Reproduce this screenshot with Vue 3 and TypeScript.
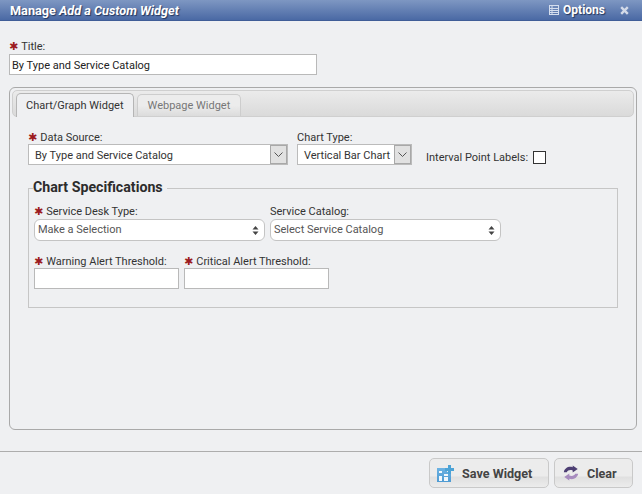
<script setup lang="ts">
const title = 'By Type and Service Catalog'
</script>

<template>
  <div class="dialog">
    <header class="head">
      <div class="head-title">Manage <em>Add a Custom Widget</em></div>
      <div class="head-options">
        <svg class="opt-icon" width="10" height="10" viewBox="0 0 10 10">
          <rect x="0.5" y="0.5" width="9" height="9" fill="none" stroke="#d5deee" />
          <path d="M0 3.500h10M0 5.500h10M0 7.500h10M3 0v10" stroke="#d5deee" fill="none" />
        </svg>
        <span>Options</span>
      </div>
      <svg class="close" width="9" height="9" viewBox="0 0 9 9">
        <path d="M1.200 1.200l6.600 6.600M7.800 1.200l-6.600 6.600" stroke="#d3dae8" stroke-width="2.400" />
      </svg>
    </header>

    <main class="body">
      <label class="lbl title-lbl"><span class="req">✱</span>Title:</label>
      <input class="text title-input" :value="title" />

      <section class="panel">
        <div class="tabbar">
          <div class="tab active">Chart/Graph Widget</div>
          <div class="tab second">Webpage Widget</div>
        </div>

        <div class="panel-content">
          <div class="row-top">
            <div class="col source">
              <label class="lbl low"><span class="req">✱</span>Data Source:</label>
              <div class="combo">
                <span class="combo-text">By Type and Service Catalog</span>
                <span class="combo-btn">
                  <svg width="9" height="5" viewBox="0 0 9 5"><path d="M0.500 0.500L4.500 4.500L8.500 0.500" fill="none" stroke="#555" /></svg>
                </span>
              </div>
            </div>
            <div class="col type">
              <label class="lbl low">Chart Type:</label>
              <div class="combo">
                <span class="combo-text">Vertical Bar Chart</span>
                <span class="combo-btn">
                  <svg width="9" height="5" viewBox="0 0 9 5"><path d="M0.500 0.500L4.500 4.500L8.500 0.500" fill="none" stroke="#555" /></svg>
                </span>
              </div>
            </div>
            <div class="interval">
              <span class="lbl-inline">Interval Point Labels:</span>
              <span class="check"></span>
            </div>
          </div>

          <fieldset class="spec">
            <legend>Chart Specifications</legend>
            <div class="row-selects">
              <div class="col">
                <label class="lbl"><span class="req">✱</span>Service Desk Type:</label>
                <div class="pill">
                  <span>Make a Selection</span>
                  <svg width="7" height="9" viewBox="0 0 7 9"><path d="M3.500 0L6.500 3.500H0.500ZM3.500 9L0.500 5.500H6.500Z" fill="#444" /></svg>
                </div>
              </div>
              <div class="col">
                <label class="lbl">Service Catalog:</label>
                <div class="pill">
                  <span>Select Service Catalog</span>
                  <svg width="7" height="9" viewBox="0 0 7 9"><path d="M3.500 0L6.500 3.500H0.500ZM3.500 9L0.500 5.500H6.500Z" fill="#444" /></svg>
                </div>
              </div>
            </div>
            <div class="row-inputs">
              <div class="col">
                <label class="lbl low"><span class="req">✱</span>Warning Alert Threshold:</label>
                <input class="text small" />
              </div>
              <div class="col">
                <label class="lbl low"><span class="req">✱</span>Critical Alert Threshold:</label>
                <input class="text small" />
              </div>
            </div>
          </fieldset>
        </div>
      </section>
    </main>

    <footer class="foot">
      <button class="btn save">
        <svg width="17" height="17" viewBox="0 0 17 17">
          <defs>
            <linearGradient id="sv" x1="0" y1="0" x2="0" y2="1">
              <stop offset="0" stop-color="#6cb2e2" />
              <stop offset="1" stop-color="#4f9bd3" />
            </linearGradient>
          </defs>
          <path d="M0 3h10v4h4v10H0z" fill="url(#sv)" />
          <path d="M11 0h3v3h3v3h-3v3h-3V6H8V3h3z" fill="#4ca3d6" />
          <path d="M2 6h3v2H2zM7 9h4v2H7zM2 11h3v5H2zM7 12h4v4H7z" fill="#f2f7fb" />
        </svg>
        <span>Save Widget</span>
      </button>
      <button class="btn clear">
        <svg width="16" height="16" viewBox="0 0 19 19">
          <path d="M1 8.500C2 3.500 7 1 11.500 2.800V0.500l6 4.200-6 4.200V6.500C8.500 5.300 5.500 6.200 4.500 8.500z" fill="#4d3f73" />
          <path d="M18 10.500c-1 5-6 7.500-10.500 5.700v2.300l-6-4.200 6-4.200v2.400c3 1.200 6 .3 7-2z" fill="#a78cbe" />
        </svg>
        <span>Clear</span>
      </button>
    </footer>
  </div>
</template>

<style>
html, body { margin: 0; background: #eff0f2; }
</style>

<style scoped>
.dialog {
  width: 642px;
  height: 494px;
  background: #eff0f2;
  display: flex;
  flex-direction: column;
  font-family: Roboto, "Liberation Sans", Arial, sans-serif;
  font-size: 11px;
  color: #333;
  overflow: hidden;
}
.head {
  height: 21px;
  flex: none;
  box-sizing: border-box;
  display: flex;
  align-items: center;
  padding: 0 13px 0 10px;
  background: linear-gradient(#7e97c2, #4a69a4);
  border-bottom: 1px solid #3f5d97;
  color: #fff;
  font-weight: 700;
  font-size: 12px;
  text-shadow: 1px 1px 1px #24365c;
}
.head-title { flex: 1; font-size: 12.7px; }
.head-options { display: flex; align-items: center; gap: 4px; margin-right: 15px; }
.body {
  flex: 1;
  padding: 19px 5px 0 9px;
  display: flex;
  flex-direction: column;
  align-items: flex-start;
  min-height: 0;
}
.lbl {
  display: block;
  line-height: 14px;
  height: 14px;
  white-space: nowrap;
  color: #333;
}
.lbl.low { line-height: 16px; }
.req { color: #9c1b20; font-size: 11px; margin: 0 3px 0 0; font-family: "DejaVu Sans", sans-serif; font-weight: 700; }
.text {
  display: block;
  box-sizing: border-box;
  background: #fff;
  border: 1px solid #b9b9b9;
  outline: none;
  padding: 1px 2px 0;
  font: 11px Roboto, "Liberation Sans", Arial, sans-serif;
  color: #222;
  height: 21px;
}
.title-input { width: 308px; margin-bottom: 12px; }
.panel {
  box-sizing: border-box;
  width: 628px;
  height: 343px;
  border: 1px solid #a9a9a9;
  border-radius: 6px;
  padding: 2px;
}
.tabbar {
  height: 27px;
  box-sizing: border-box;
  border: 1px solid #cfcfcf;
  border-radius: 5px;
  background: linear-gradient(#ebebeb, #dadada);
  display: flex;
  align-items: flex-end;
  gap: 3px;
  padding-left: 3px;
}
.tab {
  height: 22px;
  box-sizing: border-box;
  border: 1px solid #cdcdcd;
  border-bottom: none;
  border-radius: 5px 5px 0 0;
  padding: 4px 9px 0;
  white-space: nowrap;
  background: linear-gradient(#ececec 50%, #dcdcdc);
  color: #777;
}
.tab.second { padding: 4px 10px 0; }
.tab.active { background: #eff0f2; color: #333; border-color: #b5b5b5; margin-bottom: -1px; height: 24px; padding-top: 5px; }
.panel-content { padding: 13px 0 0 16px; }
.row-top { display: flex; align-items: flex-start; }
.source { width: 260px; margin-right: 9px; }
.type { width: 115px; margin-right: 14px; }
.combo {
  display: flex;
  box-sizing: border-box;
  height: 21px;
  border: 1px solid #bbb;
  background: #fff;
}
.combo-text { flex: 1; padding: 4px 0 0 6px; white-space: nowrap; overflow: hidden; }
.combo-btn {
  width: 17px;
  flex: none;
  box-sizing: border-box;
  border: 1px solid #a8a8a8;
  background: #e1e1e1;
  display: flex;
  align-items: center;
  justify-content: center;
}
.interval { display: flex; align-items: center; gap: 5px; margin-top: 21px; }
.check {
  width: 13px;
  height: 13px;
  box-sizing: border-box;
  border: 1px solid #333;
  background: #fff;
}
.spec {
  box-sizing: border-box;
  width: 590px;
  height: 129px;
  margin: 14px 0 0;
  border: 1px solid #c6c6c6;
  padding: 0 5px;
  min-width: 0;
}
legend {
  font-weight: 700;
  font-size: 14.2px;
  color: #2c2c2c;
  padding: 0 4px 2px 0;
  margin-left: -1px;
  line-height: 16px;
}
.row-selects { display: flex; gap: 5px; margin-top: 8px; }
.row-selects .col { width: 231px; }
.pill {
  box-sizing: border-box;
  height: 22px;
  border: 1px solid #c4c4c4;
  border-radius: 6px;
  background: #fff;
  display: flex;
  align-items: center;
  justify-content: space-between;
  padding: 0 5px 2px 3px;
  color: #555;
}
.pill svg { margin-top: 2px; }
.row-inputs { display: flex; gap: 5px; margin-top: 13px; }
.row-inputs .col { width: 145px; }
.small { width: 145px; }
.foot {
  height: 43px;
  flex: none;
  box-sizing: border-box;
  border-top: 1px solid #adadad;
  display: flex;
  justify-content: flex-end;
  gap: 5px;
  padding: 6px 9px 0 0;
}
.btn {
  height: 30px;
  box-sizing: border-box;
  border: 1px solid #c9c9c9;
  border-radius: 5px;
  background: linear-gradient(#ececec 60%, #e0e0e0 65%, #ececec);
  display: flex;
  align-items: center;
  gap: 8px;
  font: 700 12.6px Roboto, "Liberation Sans", Arial, sans-serif;
  color: #444;
  padding: 0 0 0 7px;
}
.clear { padding-left: 8px; }
.save { width: 120px; }
.clear { width: 79px; }
</style>
